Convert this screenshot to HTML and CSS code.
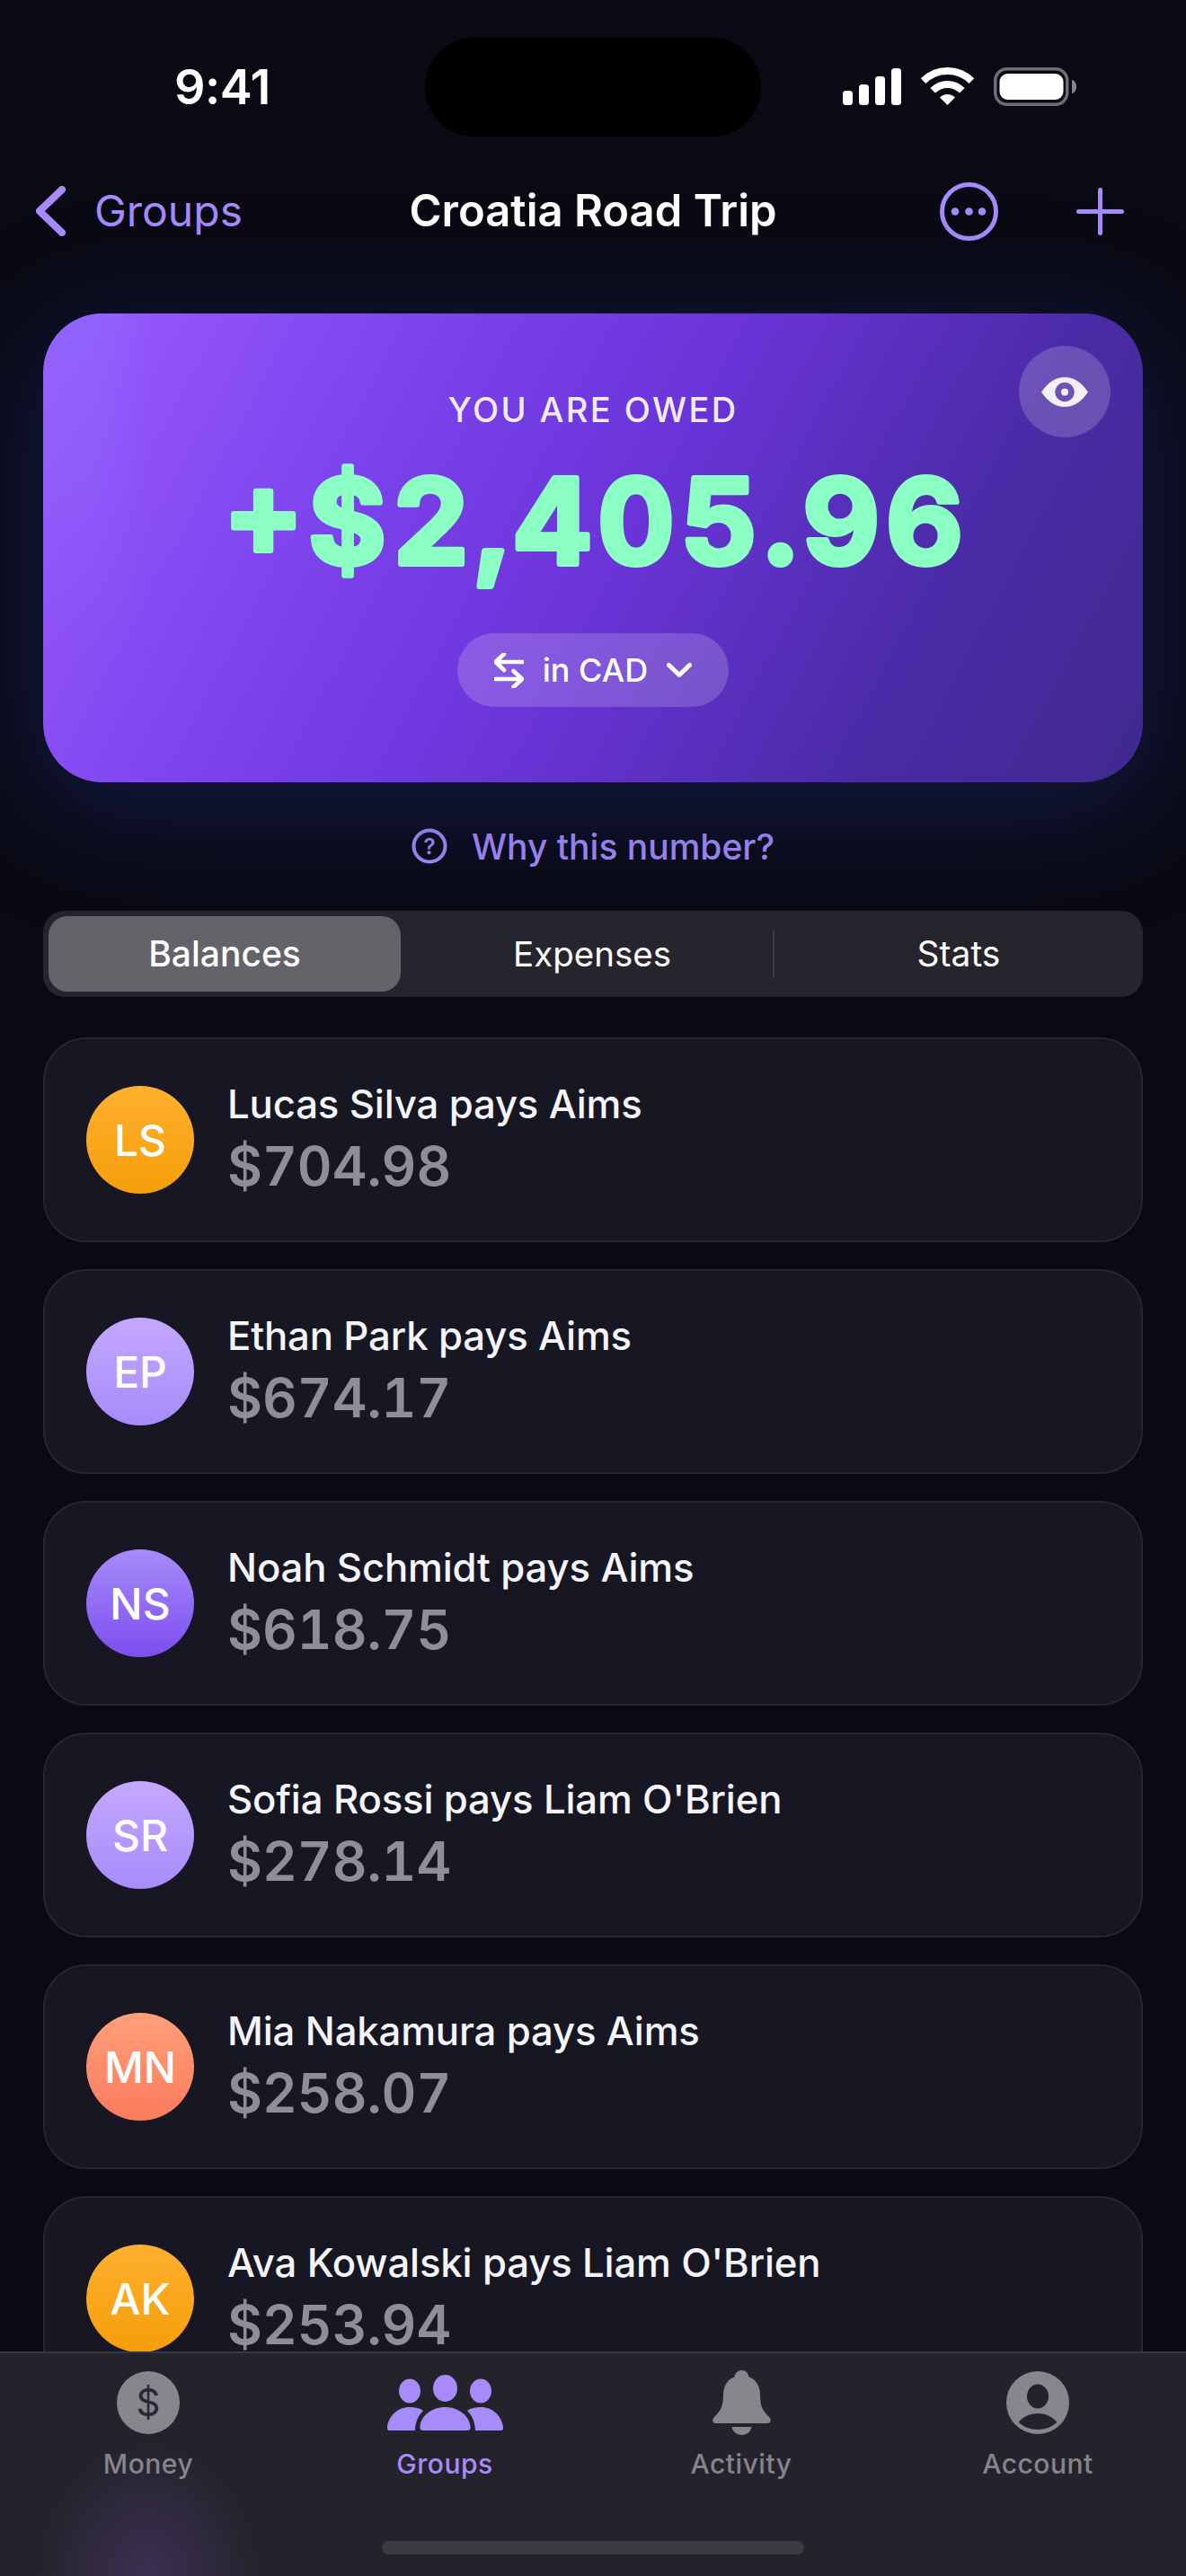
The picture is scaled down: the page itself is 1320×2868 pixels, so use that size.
FILE: index.html
```html
<!DOCTYPE html>
<html lang="en">
<head>
<meta charset="utf-8">
<title>Croatia Road Trip</title>
<link rel="stylesheet" href="styles.css">
</head>
<body>
<div class="screen">
  <div class="island"></div>
  <header class="status">
    <span class="time">9:41</span>
    <div class="status-icons">
      <svg class="signal" width="65" height="41" viewBox="0 0 65 41"><rect x="0" y="25" width="11" height="16" rx="3.5"/><rect x="18" y="18" width="11" height="23" rx="3.5"/><rect x="36" y="9" width="11" height="32" rx="3.5"/><rect x="54" y="0" width="11" height="41" rx="3.5"/></svg>
      <svg class="wifi" width="57" height="42" viewBox="0 0 57 42"><path class="wifi-arc" d="M1.6 15.1A38 38 0 0 1 55.4 15.1"/><path class="wifi-arc" d="M12.2 25.7A23 23 0 0 1 44.8 25.7"/><path class="wifi-dot" d="M28.5 42L20 33.5A12 12 0 0 1 37 33.5Z"/></svg>
      <svg class="battery" width="92" height="43" viewBox="0 0 92 43"><rect class="bat-shell" x="1.75" y="1.75" width="80" height="39.5" rx="13"/><rect class="bat-fill" x="6.5" y="7" width="71" height="29" rx="9"/><path class="bat-nub" d="M87 14c3 .5 5 3.500 5 7.500s-2 7-5 7.500z"/></svg>
    </div>
  </header>

  <nav class="nav">
    <div class="nav-left">
      <svg class="back" width="33" height="56" viewBox="0 0 33 56"><path d="M29 4L4 28L29 52"/></svg>
      <span class="nav-back-label">Groups</span>
    </div>
    <h1 class="nav-title">Croatia Road Trip</h1>
    <div class="nav-right">
      <svg width="65" height="65" viewBox="0 0 65 65"><circle class="ring" cx="32.500" cy="32.500" r="30"/><circle class="dot" cx="17" cy="32.500" r="4.300"/><circle class="dot" cx="32.500" cy="32.500" r="4.300"/><circle class="dot" cx="47" cy="32.500" r="4.300"/></svg>
      <svg width="53" height="53" viewBox="0 0 53 53"><path class="plus" d="M26.500 2.500V50.500M2.500 26.500H50.500"/></svg>
    </div>
  </nav>

  <section class="hero">
    <button class="eye-btn" aria-label="Hide">
      <svg width="52" height="33" viewBox="0 0 52 33"><path class="eye-w" d="M0 16.500C8 5 16 0 26 0C36 0 44 5 52 16.500C44 28 36 33 26 33C16 33 8 28 0 16.500Z"/><circle class="eye-p" cx="26" cy="16.500" r="10.700"/><circle class="eye-w" cx="26" cy="16.500" r="4"/></svg>
    </button>
    <div class="hero-label">YOU ARE OWED</div>
    <svg class="hero-amount" width="860" height="170" viewBox="0 0 860 170"><text x="431" y="133" text-anchor="middle" textLength="821" lengthAdjust="spacing">+$2,405.96</text></svg>
    <div class="pill">
      <svg width="33" height="39" viewBox="0 0 33 39"><path class="pill-stroke" d="M32 10H1.500M11 1L1.500 10L11 19M1 29H31M21.500 20L31 29L21.500 38"/></svg>
      <span>in CAD</span>
      <svg width="28" height="16" viewBox="0 0 28 16"><path class="pill-stroke chev" d="M2.500 2.500L14 13.500L25.500 2.500"/></svg>
    </div>
  </section>

  <div class="why">
    <svg width="40" height="40" viewBox="0 0 40 40"><circle class="why-ring" cx="20" cy="20" r="17.500"/><text class="why-q" x="20" y="28.500" text-anchor="middle">?</text></svg>
    <span>Why this number?</span>
  </div>

  <div class="tabs">
    <div class="tab tab-active">Balances</div>
    <div class="tab tab-mid">Expenses</div>
    <div class="tab tab-last">Stats</div>
  </div>

  <main class="list">
    <article class="row"><div class="avatar av-orange">LS</div><div class="row-text"><div class="row-name">Lucas Silva pays Aims</div><div class="row-amt">$704.98</div></div></article>
    <article class="row"><div class="avatar av-lav">EP</div><div class="row-text"><div class="row-name">Ethan Park pays Aims</div><div class="row-amt">$674.17</div></div></article>
    <article class="row"><div class="avatar av-violet">NS</div><div class="row-text"><div class="row-name">Noah Schmidt pays Aims</div><div class="row-amt">$618.75</div></div></article>
    <article class="row"><div class="avatar av-lav">SR</div><div class="row-text"><div class="row-name">Sofia Rossi pays Liam O'Brien</div><div class="row-amt">$278.14</div></div></article>
    <article class="row"><div class="avatar av-coral">MN</div><div class="row-text"><div class="row-name">Mia Nakamura pays Aims</div><div class="row-amt">$258.07</div></div></article>
    <article class="row"><div class="avatar av-orange">AK</div><div class="row-text"><div class="row-name">Ava Kowalski pays Liam O'Brien</div><div class="row-amt">$253.94</div></div></article>
  </main>

  <footer class="tabbar">
    <div class="tabbar-item">
      <div class="tabbar-icon"><svg width="70" height="70" viewBox="0 0 70 70"><circle class="ti-gray" cx="35" cy="35" r="35"/><text class="ti-dollar" x="35" y="50" text-anchor="middle">$</text></svg></div>
      <span class="tabbar-label">Money</span>
    </div>
    <div class="tabbar-item item-active">
      <div class="tabbar-icon"><svg width="129" height="62" viewBox="0 0 129 62"><ellipse cx="25" cy="18" rx="12" ry="13.500"/><ellipse cx="64.500" cy="15" rx="13.500" ry="15"/><ellipse cx="104" cy="18" rx="12" ry="13.500"/><path d="M40 62C37 62 36 60 36.500 57C38 45 50 36 64.500 36C79 36 91 45 92.500 57C93 60 92 62 89 62Z"/><path d="M3 62C0 62 0 60 0 58C2 45 12 36 25 36C31 36 36 37 40 40C35 45 31.500 51 31 62Z"/><path d="M126 62C129 62 129 60 129 58C127 45 117 36 104 36C98 36 93 37 89 40C94 45 97.500 51 98 62Z"/></svg></div>
      <span class="tabbar-label">Groups</span>
    </div>
    <div class="tabbar-item">
      <div class="tabbar-icon"><svg width="65" height="72" viewBox="0 0 65 72"><path class="ti-gray" d="M32.500 0C37 0 40 3.500 40.500 7.500C49 10 53 18 53 28C53 40 56 45 63 52C66 55 65 59 61 59H4C0 59 -1 55 2 52C9 45 12 40 12 28C12 18 16 10 24.500 7.500C25 3.500 28 0 32.500 0Z"/><path class="ti-gray" d="M21.500 63H43.500C43 68 38 72 32.500 72C27 72 22 68 21.500 63Z"/></svg></div>
      <span class="tabbar-label">Activity</span>
    </div>
    <div class="tabbar-item">
      <div class="tabbar-icon"><svg width="70" height="70" viewBox="0 0 70 70"><circle class="ti-gray" cx="35" cy="35" r="35"/><ellipse class="ti-dark" cx="35" cy="28" rx="12" ry="13.500"/><path class="ti-dark" d="M13.600 57C18 51 26 47 35 47C44 47 52 51 56.400 57C51 62 43 65 35 65C27 65 19 62 13.600 57Z"/></svg></div>
      <span class="tabbar-label">Account</span>
    </div>
    <div class="home-indicator"></div>
  </footer>
</div>
</body>
</html>
```
FILE: styles.css
```css
* { box-sizing: border-box; }
html, body { margin: 0; padding: 0; background: #0a0a14; }
body { font-family: "Inter", "Liberation Sans", sans-serif; color: #fff; }

.screen {
  position: relative;
  width: 1320px;
  height: 2868px;
  overflow: hidden;
  background: #0a0a14;
  display: flex;
  flex-direction: column;
}

.island {
  position: absolute;
  left: 473px;
  top: 42px;
  width: 374px;
  height: 110px;
  border-radius: 55px;
  background: #000;
}

/* status bar */
.status {
  height: 190px;
  flex: none;
  display: flex;
  justify-content: space-between;
  padding: 75px 122px 0 194px;
}
.time { font-size: 54px; line-height: 44px; font-weight: 600; letter-spacing: -0.5px; }
.status-icons { display: flex; align-items: flex-start; gap: 23px; }
.signal { fill: #fff; margin-top: 1px; }
.wifi { overflow: visible; }
.wifi-arc { fill: none; stroke: #fff; stroke-width: 8; }
.wifi-dot { fill: #fff; }
.bat-shell { fill: none; stroke: #6f6e76; stroke-width: 3.5; }
.bat-fill { fill: #fff; }
.bat-nub { fill: #85848b; }

/* nav */
.nav {
  height: 90px;
  flex: none;
  display: grid;
  grid-template-columns: 1fr auto 1fr;
  align-items: center;
}
.nav-left { display: flex; align-items: center; gap: 32px; padding-left: 40px; }
.back { fill: none; stroke: #a78bfa; stroke-width: 8; stroke-linecap: round; stroke-linejoin: round; }
.nav-back-label { font-size: 48px; color: #a78bfa; line-height: 60px; }
.nav-title { margin: 0; font-size: 49px; font-weight: 600; line-height: 60px; }
.nav-right { display: flex; align-items: center; justify-content: flex-end; gap: 87px; padding-right: 69px; }
.ring { fill: none; stroke: #a78bfa; stroke-width: 5; }
.dot { fill: #a78bfa; }
.plus { fill: none; stroke: #a78bfa; stroke-width: 5; stroke-linecap: round; }

/* hero */
.hero {
  position: relative;
  flex: none;
  margin: 69px 48px 0;
  height: 522px;
  padding-top: 85px;
  border-radius: 66px;
  background: linear-gradient(118deg, #9b5cff 0%, #7c42ec 30%, #6a34d8 52%, #4a2ba6 78%, #40298f 100%);
  box-shadow: 0 24px 130px 10px rgba(28, 48, 130, 0.42);
  display: flex;
  flex-direction: column;
  align-items: center;
}
.hero::before {
  content: "";
  position: absolute;
  left: 0;
  top: 0;
  bottom: 0;
  width: 124px;
  border-radius: 66px 0 0 66px;
  background: linear-gradient(90deg, rgba(140, 110, 255, 0.5) 45%, rgba(140, 110, 255, 0) 100%);
  -webkit-mask-image: linear-gradient(180deg, #000 0%, rgba(0, 0, 0, 0) 75%);
  mask-image: linear-gradient(180deg, #000 0%, rgba(0, 0, 0, 0) 75%);
}
.eye-btn {
  position: absolute;
  top: 36px;
  right: 36px;
  width: 102px;
  height: 102px;
  padding: 0;
  border: 0;
  border-radius: 50%;
  background: rgba(255, 255, 255, 0.18);
  display: flex;
  align-items: center;
  justify-content: center;
}
.eye-w { fill: #f1eff8; }
.eye-p { fill: #6c52b5; }
.hero-label {
  position: relative;
  font-size: 38px;
  line-height: 44px;
  font-weight: 500;
  letter-spacing: 2.4px;
  color: rgba(255, 255, 255, 0.92);
}
.hero-amount {
  position: relative;
  flex: none;
  margin-top: 17px;
}
.hero-amount text {
  font-size: 132px;
  font-weight: 700;
  fill: #8bffc4;
  stroke: #8bffc4;
  stroke-width: 6;
  stroke-linejoin: round;
  font-variant-numeric: tabular-nums;
}
.pill {
  position: relative;
  margin-top: 40px;
  width: 302px;
  height: 82px;
  border-radius: 41px;
  background: rgba(255, 255, 255, 0.18);
  display: flex;
  align-items: center;
  justify-content: center;
  gap: 21px;
  font-size: 36px;
  font-weight: 500;
}
.pill-stroke { fill: none; stroke: #fff; stroke-width: 4.500; stroke-linecap: round; stroke-linejoin: round; }
.chev { stroke-width: 5; }

/* why */
.why {
  flex: none;
  margin-top: 51px;
  height: 40px;
  display: flex;
  align-items: center;
  justify-content: center;
  gap: 27px;
  font-size: 39px;
  font-weight: 500;
  color: #a78bfa;
}
.why-ring { fill: none; stroke: #a78bfa; stroke-width: 4; }
.why-q { fill: #a78bfa; font-size: 24px; font-weight: 600; }

/* segmented */
.tabs {
  flex: none;
  margin: 52px 48px 0;
  height: 96px;
  padding: 6px 0 6px 6px;
  border-radius: 24px;
  background: #26252e;
  display: flex;
  align-items: center;
}
.tab { font-size: 39px; font-weight: 400; text-align: center; line-height: 84px; height: 84px; }
.tab-active { width: 392px; margin-right: 8px; border-radius: 21px; background: #636369; font-weight: 500; }
.tab-mid { width: 408px; padding-left: 4px; font-size: 38.5px; line-height: 54px; height: 54px; border-right: 2px solid #3c3c44; }
.tab-last { flex: 1; line-height: 54px; height: 54px; }

/* list */
.list { flex: none; margin: 45px 48px 0; display: flex; flex-direction: column; gap: 30px; }
.row {
  height: 228px;
  flex: none;
  padding: 0 46px;
  border: 2px solid #26262f;
  border-radius: 48px;
  background: #161722;
  display: flex;
  align-items: center;
  gap: 37px;
}
.avatar {
  flex: none;
  width: 120px;
  height: 120px;
  border-radius: 50%;
  display: flex;
  align-items: center;
  justify-content: center;
  font-size: 48px;
  font-weight: 500;
}
.av-orange { background: linear-gradient(180deg, #ffb02e, #f59e0b); }
.av-lav { background: linear-gradient(180deg, #c4a8ff, #a78bfa); }
.av-violet { background: linear-gradient(180deg, #a78bfa, #7c4df0); }
.av-coral { background: linear-gradient(180deg, #ffa07a, #fb7a5c); }
.row-text { display: flex; flex-direction: column; }
.row-name { font-size: 43.7px; line-height: 54px; font-weight: 450; color: #f5f4fa; margin-top: -1px; letter-spacing: -0.15px; }
.row-amt { font-size: 60px; line-height: 72px; font-weight: 600; color: #8e8d99; margin-top: 5px; font-variant-numeric: tabular-nums; }

/* tab bar */
.tabbar {
  position: absolute;
  left: 0;
  right: 0;
  bottom: 0;
  height: 250px;
  padding-top: 19px;
  border-top: 2px solid #38383f;
  background: radial-gradient(ellipse 125px 150px at 165px 100%, #3c3052 0%, rgba(60, 48, 82, 0) 100%), #24232c;
  display: grid;
  grid-template-columns: repeat(4, 1fr);
  align-content: start;
}
.tabbar-item { display: flex; flex-direction: column; align-items: center; }
.tabbar-icon { height: 72px; display: flex; align-items: center; justify-content: center; }
.tabbar-icon svg { overflow: visible; }
.tabbar-label { margin-top: 14px; font-size: 30px; line-height: 36px; font-weight: 500; letter-spacing: 0.5px; color: #85848c; }
.item-active .tabbar-label { color: #a78bfa; }
.item-active svg { fill: #a78bfa; }
.ti-gray { fill: #87868d; }
.ti-dark { fill: #24232c; }
.ti-dollar { fill: #2a2932; font-size: 42px; }
.home-indicator {
  position: absolute;
  left: 425px;
  top: 209px;
  width: 470px;
  height: 15px;
  border-radius: 8px;
  background: #3b3b41;
}
```
